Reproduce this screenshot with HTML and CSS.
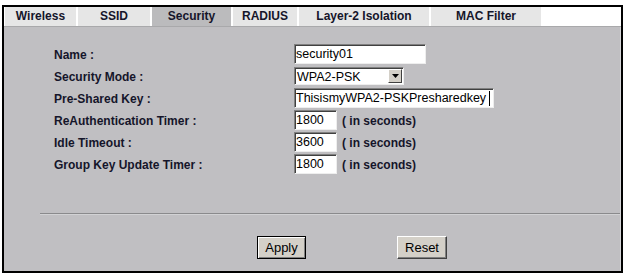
FILE: index.html
```html
<!DOCTYPE html>
<html lang="en">
<head>
    <meta charset="UTF-8">
    <title>Wireless Security</title>
    <link rel="stylesheet" href="styles.css">
</head>
<body>
    <div class="frame">
        <div class="tabs">
            <div class="tab t-wireless">Wireless</div>
            <div class="tab t-ssid">SSID</div>
            <div class="tab t-security active">Security</div>
            <div class="tab t-radius">RADIUS</div>
            <div class="tab t-layer2">Layer-2 Isolation</div>
            <div class="tab t-mac">MAC Filter</div>
        </div>
        <div class="content">
            <div class="form">
                <div class="row">
                    <label class="label">Name :</label>
                    <input type="text" class="field f-name" value="security01">
                </div>
                <div class="row">
                    <label class="label">Security Mode :</label>
                    <div class="select-box">
                        <span class="select-text">WPA2-PSK</span>
                        <span class="select-btn">
                            <svg width="7" height="4" viewBox="0 0 7 4"><path d="M0 0h7L3.5 4z" fill="#000"/></svg>
                        </span>
                    </div>
                </div>
                <div class="row">
                    <label class="label">Pre-Shared Key :</label>
                    <input type="text" class="field f-key" value="ThisismyWPA2-PSKPresharedkey">
                    <span class="caret"></span>
                </div>
                <div class="row">
                    <label class="label">ReAuthentication Timer :</label>
                    <input type="text" class="field f-timer" value="1800">
                    <span class="unit">( in seconds)</span>
                </div>
                <div class="row">
                    <label class="label">Idle Timeout :</label>
                    <input type="text" class="field f-timer" value="3600">
                    <span class="unit">( in seconds)</span>
                </div>
                <div class="row">
                    <label class="label">Group Key Update Timer :</label>
                    <input type="text" class="field f-timer" value="1800">
                    <span class="unit">( in seconds)</span>
                </div>
            </div>
            <div class="divider"></div>
            <div class="buttons">
                <button class="btn btn-apply">Apply</button>
                <button class="btn btn-reset">Reset</button>
            </div>
        </div>
    </div>
</body>
</html>
```

FILE: styles.css
```css
body {
    margin: 0;
    padding: 0;
    background-color: #fff;
    font-family: "Liberation Sans", Arial, sans-serif;
}

.frame {
    margin: 5px 0 0 2px;
    width: 617px;
    height: 264px;
    border: 2px solid #000;
    display: flex;
    flex-direction: column;
}

/* tab strip */
.tabs {
    display: flex;
    gap: 2px;
    padding-left: 1px;
    height: 19px;
    border-bottom: 1px solid #a9a9ab;
    background-color: #fff;
}

.tab {
    background-color: #e6e6e6;
    color: #15152a;
    font-size: 12px;
    font-weight: bold;
    text-align: center;
    line-height: 19px;
}

.tab.active {
    background-color: #bbbbbd;
}

.t-wireless { width: 71px; }
.t-ssid { width: 72px; }
.t-security { width: 79px; }
.t-radius { width: 64px; }
.t-layer2 { width: 130px; }
.t-mac { width: 110px; }

/* main panel */
.content {
    flex: 1;
    background-color: #c0bfc2;
    border-right: 1px solid #d6d6d8;
}

.form {
    padding-top: 16px;
}

.row {
    display: flex;
    align-items: center;
    height: 22px;
}

.label {
    width: 240px;
    padding-left: 50px;
    font-size: 12px;
    font-weight: bold;
    color: #15152a;
    position: relative;
    top: 1px;
}

.field {
    box-sizing: border-box;
    height: 20px;
    margin: 0;
    padding: 0 1px;
    font-family: "Liberation Sans", Arial, sans-serif;
    font-size: 12.5px;
    color: #000;
    background-color: #fff;
    border-top: 1px solid #808080;
    border-left: 1px solid #808080;
    border-right: 1px solid #eeeeee;
    border-bottom: 1px solid #eeeeee;
    box-shadow: inset 1px 1px 0 #404040;
    outline: none;
}

.f-name { width: 132px; }
.f-key { width: 200px; }
.f-timer { width: 43px; }

.caret {
    width: 1px;
    height: 15px;
    background-color: #000;
    margin-left: -5px;
}

.unit {
    margin-left: 5px;
    font-size: 12px;
    font-weight: bold;
    color: #15152a;
    position: relative;
    top: 1px;
}

/* fake dropdown */
.select-box {
    box-sizing: border-box;
    width: 110px;
    height: 18px;
    display: flex;
    align-items: center;
    background-color: #fff;
    border-top: 1px solid #808080;
    border-left: 1px solid #808080;
    border-right: 1px solid #eeeeee;
    border-bottom: 1px solid #eeeeee;
    box-shadow: inset 1px 1px 0 #404040;
    padding: 1px 1px 0 2px;
}

.select-text {
    flex: 1;
    font-size: 12.5px;
    color: #000;
}

.select-btn {
    box-sizing: border-box;
    width: 14px;
    height: 14px;
    display: flex;
    align-items: center;
    justify-content: center;
    background-color: #d4d0c8;
    border-top: 1px solid #fff;
    border-left: 1px solid #fff;
    border-right: 1px solid #404040;
    border-bottom: 1px solid #404040;
    margin-top: -1px;
}

.divider {
    margin: 38px 0 0 36px;
    height: 0;
    border-top: 1px solid #8a8a8c;
    border-bottom: 1px solid #d2d2d4;
}

.buttons {
    display: flex;
    padding: 21px 0 0 253px;
}

.btn {
    box-sizing: border-box;
    height: 23px;
    margin: 0;
    padding: 0;
    font-family: "Liberation Sans", Arial, sans-serif;
    font-size: 13px;
    color: #000;
    background-color: #d4d0c8;
    cursor: pointer;
}

.btn-apply {
    width: 49px;
    border: 1px solid #000;
    box-shadow: inset 1px 1px 0 #fff, inset -1px -1px 0 #808080;
}

.btn-reset {
    width: 50px;
    margin-left: 91px;
    border-top: 1px solid #fff;
    border-left: 1px solid #fff;
    border-right: 1px solid #404040;
    border-bottom: 1px solid #404040;
    box-shadow: inset -1px -1px 0 #808080;
}
```
